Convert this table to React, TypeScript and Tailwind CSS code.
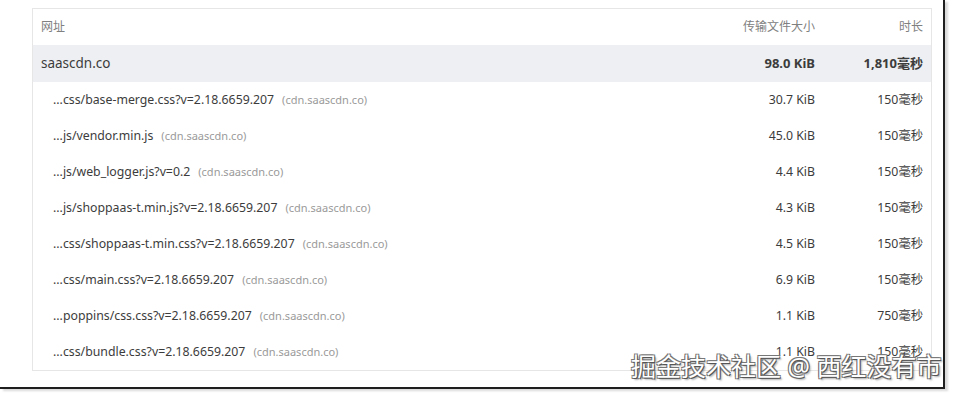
const rows = [
  { path: "...css/base-merge.css?v=2.18.6659.207", size: "30.7 KiB", time: "150毫秒" },
  { path: "...js/vendor.min.js", size: "45.0 KiB", time: "150毫秒" },
  { path: "...js/web_logger.js?v=0.2", size: "4.4 KiB", time: "150毫秒" },
  { path: "...js/shoppaas-t.min.js?v=2.18.6659.207", size: "4.3 KiB", time: "150毫秒" },
  { path: "...css/shoppaas-t.min.css?v=2.18.6659.207", size: "4.5 KiB", time: "150毫秒" },
  { path: "...css/main.css?v=2.18.6659.207", size: "6.9 KiB", time: "150毫秒" },
  { path: "...poppins/css.css?v=2.18.6659.207", size: "1.1 KiB", time: "750毫秒" },
  { path: "...css/bundle.css?v=2.18.6659.207", size: "1.1 KiB", time: "150毫秒" },
];

export default function App() {
  return (
    <div className="relative w-[956px] h-[393px] bg-white overflow-hidden font-['Noto_Sans','Noto_Sans_CJK_SC',sans-serif]">
      <div className="w-[945px] h-[389px] border-r-2 border-b-2 border-[#1e1e1e] shadow-[3px_2px_2px_rgba(0,0,0,0.15)] pl-8 pt-2">
        <div className="w-[900px] border border-[#e6e6e6] text-[#3c3c3c]">
          <div className="flex items-center h-[36px] px-2 text-[12px] text-[#808080]">
            <div className="flex-1">网址</div>
            <div className="w-[120px] text-right">传输文件大小</div>
            <div className="w-[108px] text-right">时长</div>
          </div>
          <div className="flex items-center h-[37px] px-2 bg-[#edeff2] text-[13px]">
            <div className="flex-1 text-[13.5px]">saascdn.co</div>
            <div className="w-[120px] text-right font-bold">98.0 KiB</div>
            <div className="w-[108px] text-right font-bold">1,810毫秒</div>
          </div>
          {rows.map((r) => (
            <div key={r.path} className="flex items-center h-[36px] px-2 text-[12.3px]">
              <div className="flex-1 pl-3 flex items-baseline">
                <span>{r.path}</span>
                <span className="ml-2 text-[11px] text-[#9a9a9a]">(cdn.saascdn.co)</span>
              </div>
              <div className="w-[120px] text-right">{r.size}</div>
              <div className="w-[108px] text-right">{r.time}</div>
            </div>
          ))}
        </div>
      </div>
      <div className="absolute left-[631px] top-[350px] text-[25px] leading-[32px] text-white [text-shadow:1px_1px_0_#555,-1px_-1px_0_#777,1px_-1px_0_#777,-1px_1px_0_#777,2px_2px_2px_rgba(0,0,0,0.35)]">
        掘金技术社区 @ 西红没有市
      </div>
    </div>
  );
}
